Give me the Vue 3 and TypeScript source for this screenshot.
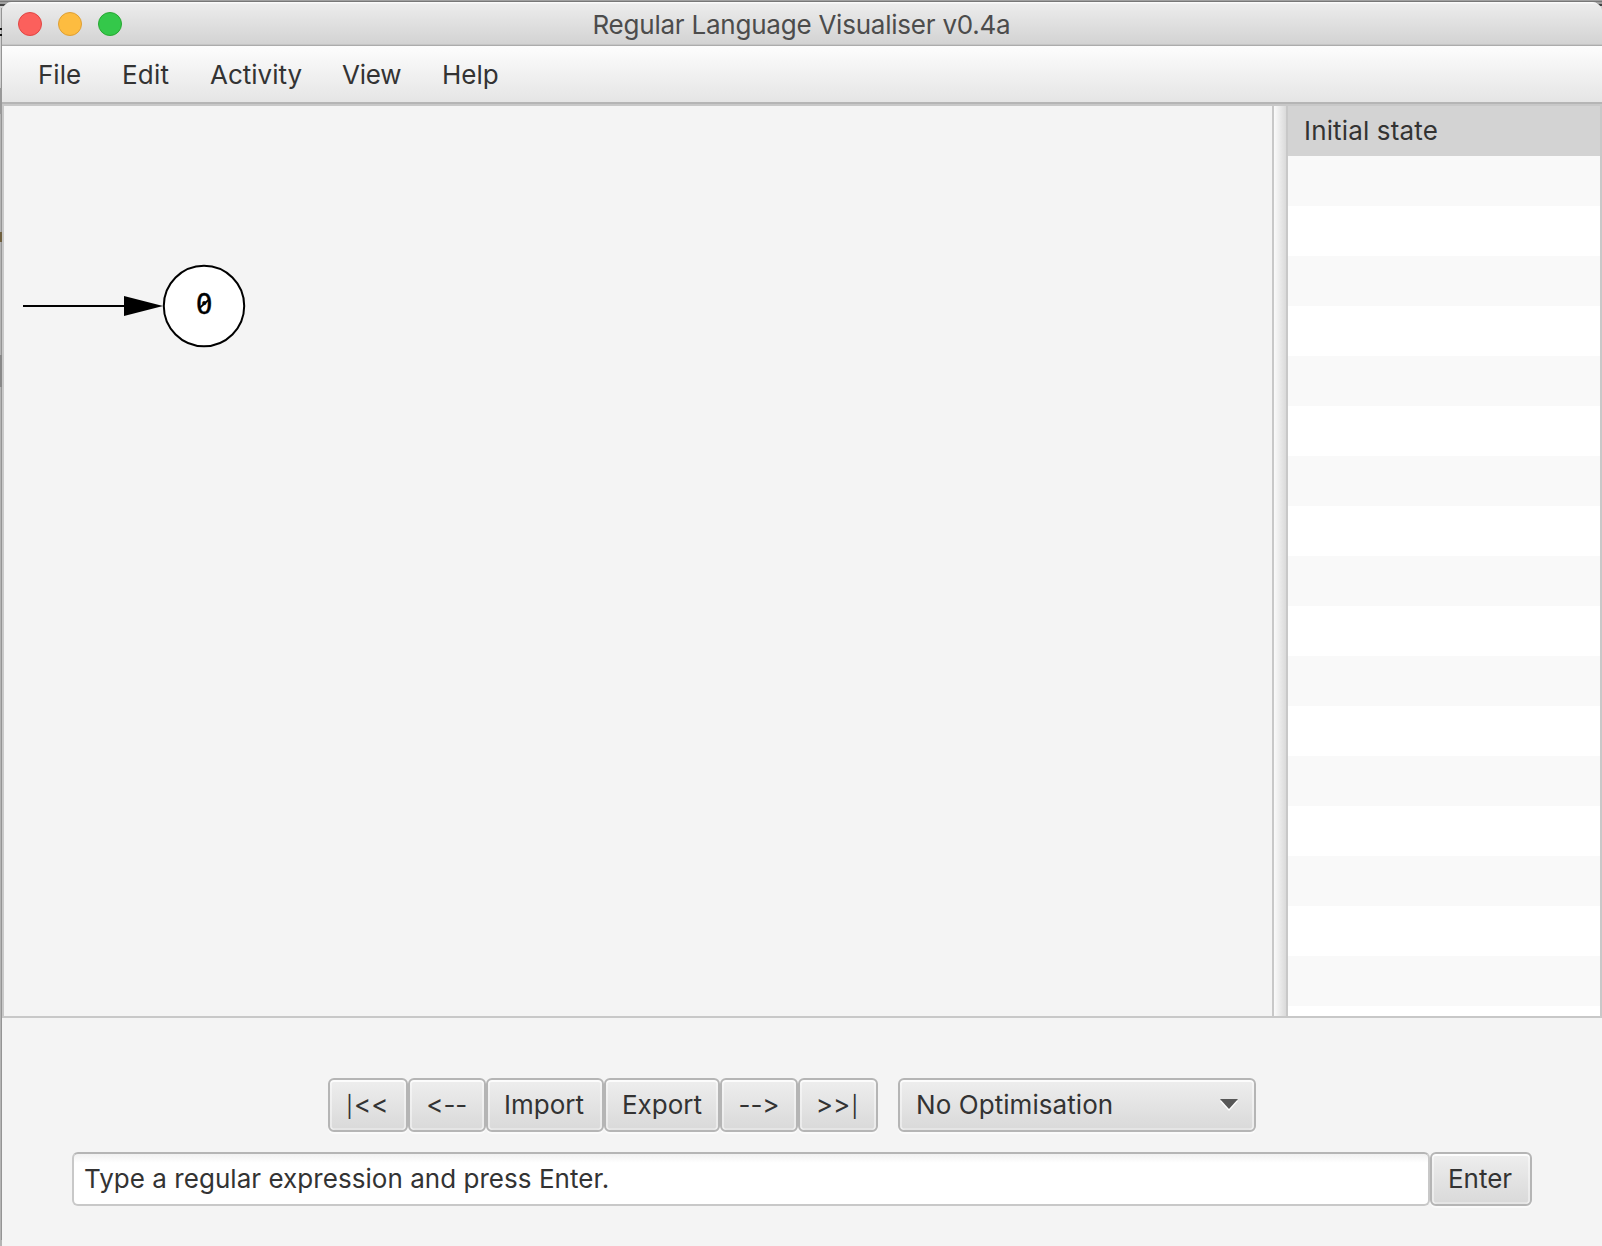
<script setup lang="ts">
interface Item { label: string; cls: string }

const menus: Item[] = [
  { label: 'File', cls: 'file' },
  { label: 'Edit', cls: 'edit' },
  { label: 'Activity', cls: 'activity' },
  { label: 'View', cls: 'view' },
  { label: 'Help', cls: 'help' },
]
const buttons: Item[] = [
  { label: '|<<', cls: 'first' },
  { label: '<--', cls: 'prev' },
  { label: 'Import', cls: 'import' },
  { label: 'Export', cls: 'export' },
  { label: '-->', cls: 'next' },
  { label: '>>|', cls: 'last' },
]
const rows: string[] = ['Initial state', ...Array<string>(18).fill('')]

// Separates the bar from the chevrons so that it can be set in a smaller size.
const pieces = (label: string): string[] => label.split(/(\|)/).filter(Boolean)
</script>

<template>
  <div class="desktop">
    <i class="bit b1"></i><i class="bit b2"></i><i class="bit b3"></i><i class="bit b4"></i><i class="bit b5"></i>
    <div class="window">
      <header class="titlebar">
        <div class="lights"><i class="red"></i><i class="amber"></i><i class="green"></i></div>
        <h1><span>Regular Language Visualiser v0.4a</span></h1>
      </header>
      <nav class="menubar">
        <span v-for="m in menus" :key="m.label" class="menu" :class="m.cls">{{ m.label }}</span>
      </nav>
      <main class="split">
        <section class="canvas">
          <svg width="260" height="260" viewBox="4 106 260 260">
            <path d="M23 306H126" stroke="#000" stroke-width="2" />
            <path d="M124 296L163 306L124 316Z" />
            <circle cx="204" cy="306" r="40.2" fill="#fff" stroke="#000" stroke-width="2" />
            <text x="204.2" y="314" text-anchor="middle">0</text>
            <path d="M199.5 308L208.5 300" stroke="#000" stroke-width="1.8" />
          </svg>
        </section>
        <div class="divider"></div>
        <ul class="list">
          <li v-for="(r, i) in rows" :key="i" :class="{ selected: i === 0 }"><span>{{ r }}</span></li>
        </ul>
      </main>
      <footer>
        <div class="controls">
          <button v-for="b in buttons" :key="b.cls" class="btn" :class="b.cls"><span><span v-for="(p, i) in pieces(b.label)" :key="i" :class="{ bar: p === '|' }">{{ p }}</span></span></button>
          <div class="btn combo">
            <span>No Optimisation</span>
            <svg width="18" height="12" viewBox="0 0 18 12"><path d="M0 2H18L9 12Z" fill="#fff" /><path d="M0 0H18L9 10Z" fill="#575757" /></svg>
          </div>
        </div>
        <div class="entry">
          <div class="field"><span>Type a regular expression and press Enter.</span></div>
          <button class="btn enter"><span>Enter</span></button>
        </div>
      </footer>
    </div>
  </div>
</template>

<style>
body { overflow: hidden; }
</style>

<style scoped>
* { box-sizing: border-box; }
.desktop {
  position: relative; width: 1602px; height: 1246px; padding: 2px 0 0 2px;
  background: linear-gradient(#a0a0a0 0 1px, #777 1px 2px, #a0a0a0 2px 4px, #444 4px 6px, #d0d0d0 6px 80px, #b4b4b4 110px);
  font: 26px/30px Inter, "Noto Sans", sans-serif; font-feature-settings: "calt" 0; color: #333;
  overflow: hidden; white-space: nowrap;
}
.desktop::before { content: ""; position: absolute; left: 1px; top: 8px; width: 1px; height: 1232px; background: #949494; }
.bit { position: absolute; left: 0; width: 2px; background: #111; }
.b1 { top: 28px; height: 2px; }
.b2 { top: 34px; height: 2px; }
.b3 { top: 232px; height: 10px; background: #70603f; }
.b4 { top: 355px; height: 32px; background: #888; }
.b5 { top: 88px; height: 26px; background: #999; }
.window { width: 1600px; height: 1244px; background: #f4f4f4; border-radius: 10px 10px 0 0; overflow: hidden; }
.titlebar {
  display: grid; grid-template-columns: 1fr; height: 44px; align-items: center;
  background: linear-gradient(#fafafa 0 1px, #ececec 2px, #d3d3d3 42px, #c5c5c5 42px 43px, #acacac 43px);
}
.lights { grid-area: 1 / 1; display: flex; gap: 16px; padding: 0 0 1px 16px; }
.lights i { width: 24px; height: 24px; border-radius: 50%; border: 1px solid; }
.red { background: #fc605c; border-color: #e04644 !important; }
.amber { background: #fdbc40; border-color: #de9f34 !important; }
.green { background: #34c84a; border-color: #28a732 !important; }
h1 { grid-area: 1 / 1; margin: 0; padding: 1px 1px 0 0; font: inherit; color: #4c4c4c; text-align: center; line-height: 44px; letter-spacing: -0.23px; }
.menubar {
  display: flex; height: 58px; padding-top: 14px;
  background: linear-gradient(#fdfdfd, #e5e5e5 56px, #b5b5b5 56px);
}
.menu { flex: none; }
.file { width: 84px; margin-left: 36px; }
.edit { width: 88px; letter-spacing: 0.2px; }
.activity { width: 132px; }
.view { width: 100px; letter-spacing: -0.2px; }
.split { display: flex; height: 914px; border: 2px solid #c8c8c8; }
.canvas { width: 1268px; overflow: hidden; }
.canvas svg { display: block; }
.canvas text { font: 28px "DejaVu Sans Mono", monospace; stroke: #000; stroke-width: 0.4px; }
.divider {
  width: 16px; border: solid #c8c8c8; border-width: 0 2px;
  background: linear-gradient(90deg, #fafafa, #efefef 35%, #dadada);
}
.list { flex: 1; margin: 0; padding: 0; list-style: none; overflow: hidden; background: #fff; }
.list li { height: 50px; padding-left: 16px; line-height: 50px; background: #fff; letter-spacing: 0.15px; }
.list li:nth-child(even) { background: #f9f9f9; }
.list .selected { background: #d3d3d3; }
footer { display: flex; flex-direction: column; gap: 20px; padding-top: 60px; }
.controls { display: flex; padding-left: 326px; }
.btn {
  flex: none; display: flex; align-items: center; justify-content: center; height: 54px; margin: 0; padding: 0;
  font: inherit; font-feature-settings: inherit; color: inherit; border: 2px solid #b5b5b5; border-radius: 6px;
  background: linear-gradient(#eeeeee, #d9d9d9);
  box-shadow: inset 0 2px #fcfcfc, inset 2px 0 #ffffff70, inset -2px 0 #ffffff70, inset 0 -2px #ffffff50, 0 2px #fafafa;
}
.bar { font-size: 21px; line-height: 1; margin: 0 1px; }
.first { width: 79.5px; padding-right: 2px; }
.prev { width: 78.5px; }
.import { width: 118px; padding-right: 2px; }
.export { width: 116px; }
.next { width: 78px; }
.last { width: 80px; padding-right: 1px; }
.combo { width: 358px; margin-left: 20px; justify-content: space-between; padding: 0 16px; letter-spacing: 0.07px; }
.entry { display: flex; padding-left: 70px; }
.field {
  width: 1358px; height: 54px; padding-left: 10px; line-height: 50px; border: 2px solid #c8c8c8; border-top-color: #b5b5b5;
  border-radius: 6px; background: linear-gradient(#f1f1f1, #fff 9px); letter-spacing: 0.04px;
}
.enter { width: 102px; padding-right: 2px; }
</style>
